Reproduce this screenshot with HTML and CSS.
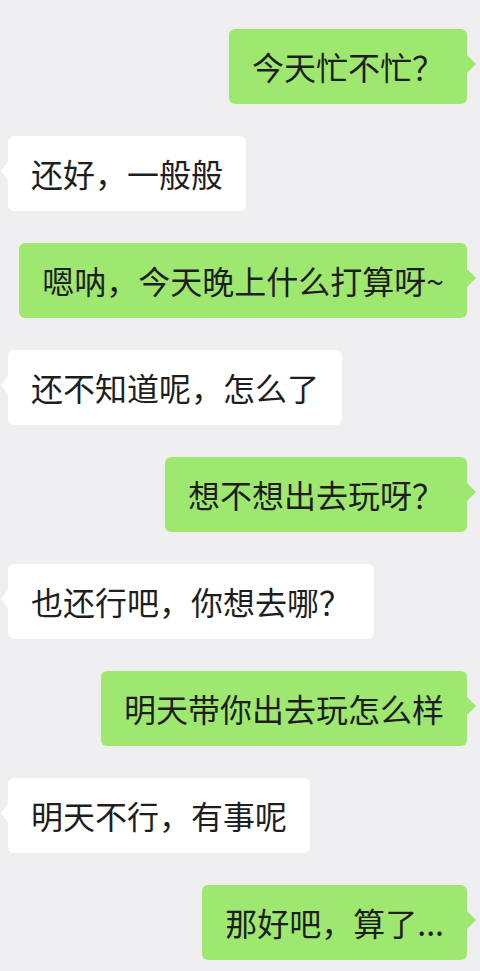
FILE: index.html
```html
<!DOCTYPE html>
<html lang="zh-CN">
<head>
    <meta charset="UTF-8">
    <meta name="viewport" content="width=device-width, initial-scale=1.0">
    <title>聊天</title>
    <link rel="stylesheet" href="styles.css">
</head>
<body>
    <div class="chat">
        <div class="row me"><div class="bubble">今天忙不忙？</div></div>
        <div class="row other"><div class="bubble">还好，一般般</div></div>
        <div class="row me"><div class="bubble">嗯呐，今天晚上什么打算呀~</div></div>
        <div class="row other"><div class="bubble">还不知道呢，怎么了</div></div>
        <div class="row me"><div class="bubble">想不想出去玩呀？</div></div>
        <div class="row other"><div class="bubble">也还行吧，你想去哪？</div></div>
        <div class="row me"><div class="bubble">明天带你出去玩怎么样</div></div>
        <div class="row other"><div class="bubble">明天不行，有事呢</div></div>
        <div class="row me"><div class="bubble">那好吧，算了...</div></div>
    </div>
</body>
</html>
```

FILE: styles.css
```css
html, body {
    margin: 0;
    padding: 0;
    background: #efeff1;
}

body {
    font-family: "Noto Sans CJK SC", "Noto Sans", sans-serif;
    color: #1e1e1e;
    overflow: hidden;
}

.chat {
    display: flex;
    flex-direction: column;
    gap: 32px;
    padding: 29px 13px 10px 8px;
}

.row {
    display: flex;
}

.row.me {
    justify-content: flex-end;
}

.row.other {
    justify-content: flex-start;
}

.bubble {
    position: relative;
    padding: 16px 23px;
    font-size: 32px;
    line-height: 43px;
    border-radius: 6px;
    white-space: nowrap;
}

.me .bubble {
    background: #9ee86f;
}

.other .bubble {
    background: #ffffff;
}

/* little tail pointing at the sender's side */
.bubble::after {
    content: "";
    position: absolute;
    top: 26px;
    border-top: 9px solid transparent;
    border-bottom: 9px solid transparent;
}

.me .bubble::after {
    right: -9px;
    border-left: 9px solid #9ee86f;
}

.other .bubble::after {
    left: -7px;
    border-right: 7px solid #ffffff;
}
```
